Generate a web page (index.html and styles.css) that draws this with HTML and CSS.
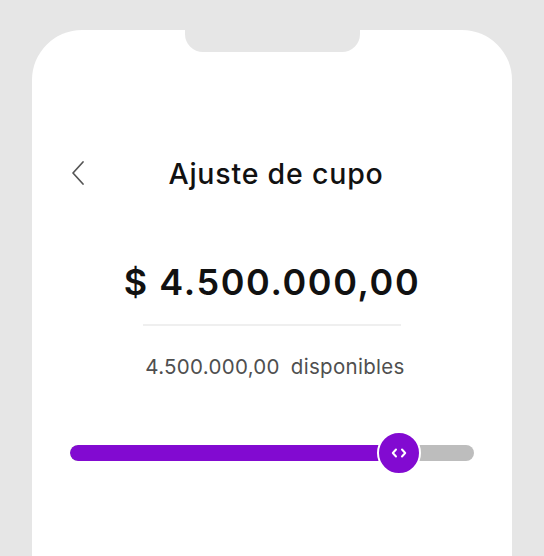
FILE: index.html
```html
<!DOCTYPE html>
<html lang="es">
<head>
<meta charset="utf-8">
<title>Ajuste de cupo</title>
<link rel="stylesheet" href="styles.css">
</head>
<body>
<div class="phone">
  <div class="notch"></div>
  <header class="header">
    <button class="back" aria-label="Volver">
      <svg width="14" height="26" viewBox="0 0 14 26"><path d="M12 2 L2 13 L12 24" fill="none" stroke="#555" stroke-width="1.7" stroke-linecap="round" stroke-linejoin="round"/></svg>
    </button>
    <h1 class="title">Ajuste de cupo</h1>
  </header>
  <div class="amount">$ 4.500.000,00</div>
  <div class="divider"></div>
  <div class="available"><span>4.500.000,00</span><span>disponibles</span></div>
  <div class="slider">
    <div class="track">
      <div class="fill" style="width: 81.4%"></div>
    </div>
    <div class="thumb" style="left: 81.4%">
      <svg width="16" height="10" viewBox="0 0 16 10"><path d="M5 1.5 L1.8 5 L5 8.5 M11 1.5 L14.2 5 L11 8.5" fill="none" stroke="#fff" stroke-width="2" stroke-linecap="round" stroke-linejoin="round"/></svg>
    </div>
  </div>
</div>
</body>
</html>
```
FILE: styles.css
```css
html, body {
  margin: 0;
  padding: 0;
  height: 100%;
}
body {
  background: #e6e6e6;
  font-family: Inter, "Noto Sans", sans-serif;
  overflow: hidden;
}
.phone {
  margin: 30px 32px 0;
  height: 526px;
  background: #fff;
  border-radius: 50px 50px 0 0;
  display: flex;
  flex-direction: column;
  padding: 0 38px;
}
.notch {
  align-self: center;
  width: 175px;
  height: 22px;
  background: #e6e6e6;
  border-radius: 0 0 18px 18px;
}
.header {
  margin-top: 101px;
  height: 40px;
  position: relative;
  display: flex;
  align-items: center;
  justify-content: center;
}
.back {
  position: absolute;
  left: 1px;
  top: 7px;
  background: none;
  border: 0;
  padding: 0;
  width: 14px;
  height: 26px;
}
.title {
  margin: 0 0 0 8px;
  font-size: 28.5px;
  font-weight: 500;
  color: #111;
  letter-spacing: 0.8px;
}
.amount {
  margin-top: 67px;
  text-align: center;
  font-size: 36px;
  line-height: 44px;
  font-weight: 600;
  color: #111;
  letter-spacing: 1.6px;
}
.divider {
  align-self: center;
  margin-top: 20px;
  width: 258px;
  height: 2px;
  background: #efefef;
}
.available {
  margin-top: 28px;
  padding-left: 6px;
  display: flex;
  justify-content: center;
  gap: 11px;
  font-size: 20.5px;
  line-height: 26px;
  color: #4f4f4f;
  letter-spacing: 0.3px;
}
.slider {
  margin-top: 53px;
  position: relative;
  height: 40px;
  display: flex;
  align-items: center;
}
.track {
  width: 100%;
  height: 16px;
  border-radius: 8px;
  background: #bdbdbd;
  overflow: hidden;
}
.fill {
  height: 100%;
  background: #820ad1;
  border-radius: 8px 0 0 8px;
}
.thumb {
  position: absolute;
  top: -2px;
  width: 44px;
  height: 44px;
  margin-left: -22px;
  box-sizing: border-box;
  border-radius: 50%;
  background: #820ad1;
  border: 2px solid #fff;
  display: flex;
  align-items: center;
  justify-content: center;
}
```
